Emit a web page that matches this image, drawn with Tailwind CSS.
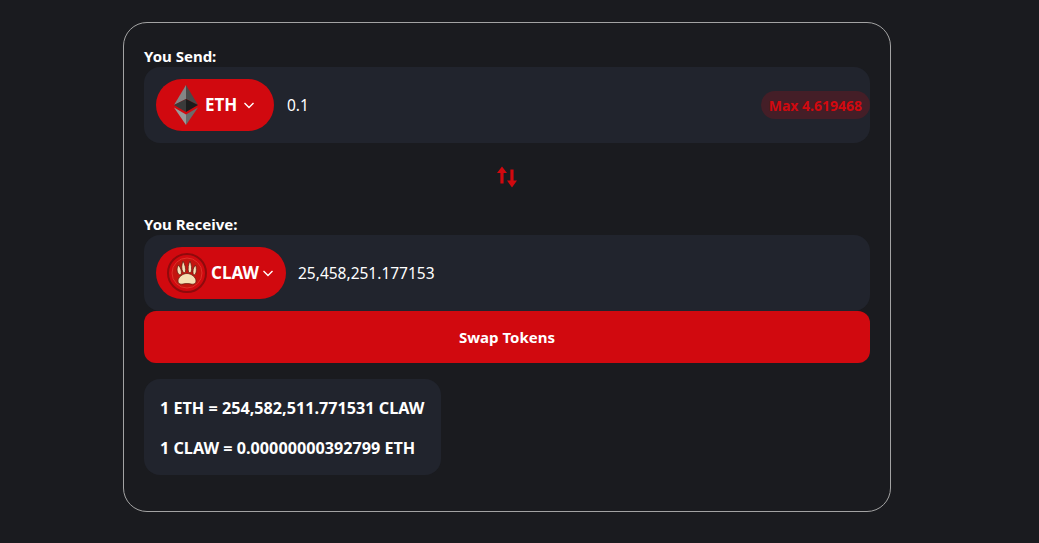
<!DOCTYPE html>
<html lang="en">
<head>
    <meta charset="UTF-8">
    <title>Swap</title>
    <script src="https://cdn.jsdelivr.net/npm/@tailwindcss/browser@4"></script>
</head>
<body class="bg-[#1a1b1f] h-[543px] overflow-hidden font-['Noto_Sans',sans-serif] text-white">
    <main class="w-[768px] h-[490px] ml-[123px] mt-[22px] border border-[#a3a3a3] rounded-3xl px-5 pt-[22px]">
        <!-- Send -->
        <div class="text-[15px] font-bold leading-[22px]">You Send:</div>
        <div class="h-[76px] bg-[#21242d] rounded-2xl flex items-center pl-3">
            <button class="w-[118px] h-[52px] bg-[#d1090f] rounded-full flex items-center pl-[15px] shrink-0">
                <svg width="30" height="40" viewBox="0 0 30 40" class="shrink-0">
                    <polygon points="15,0 15,14 3,20" fill="#858585"/>
                    <polygon points="15,0 27,20 15,14" fill="#4a4a4a"/>
                    <polygon points="3,20 15,14 15,27" fill="#3a3a3a"/>
                    <polygon points="15,14 27,20 15,27" fill="#1c1c1c"/>
                    <polygon points="3,22.5 15,29.5 15,40" fill="#9a9a9a"/>
                    <polygon points="27,22.5 15,29.5 15,40" fill="#6b6b6b"/>
                </svg>
                <span class="ml-[4px] text-[17px] font-bold">ETH</span>
                <svg width="12" height="12" viewBox="0 0 12 12" fill="none" stroke="white" stroke-width="1.4" class="ml-[6px]"><path d="M1.5 4l4.5 4.500L10.500 4"/></svg>
            </button>
            <span class="ml-[13px] pt-[2px] text-[15.5px]">0.1</span>
            <span class="ml-auto h-7 pt-[1px] flex items-center rounded-full bg-[#d1090f]/20 px-2 text-sm font-bold text-[#d1090f]">Max 4.619468</span>
        </div>

        <div class="h-[70px] pb-[2px] flex items-center justify-center">
            <svg width="24" height="24" viewBox="0 0 24 24" fill="#d1090f">
                <path d="M7 1.500l5 6.500H8.600v10.500H5.400V8H2z"/>
                <path d="M15.400 4.500h3.200V15.500H22l-5 7-5-7h3.400z"/>
            </svg>
        </div>

        <!-- Receive -->
        <div class="text-[15px] font-bold leading-[22px]">You Receive:</div>
        <div class="h-[76px] bg-[#21242d] rounded-2xl flex items-center pl-3">
            <button class="w-[130px] h-[52px] bg-[#d1090f] rounded-full flex items-center pl-[11px] shrink-0">
                <svg width="40" height="40" viewBox="0 0 40 40" class="shrink-0">
                    <circle cx="20" cy="20" r="19" fill="#d1090f" stroke="#8e0a0c" stroke-width="2"/>
                    <circle cx="20" cy="20" r="15" fill="#c4150f" stroke="#e0302a" stroke-width="1"/>
                    <g fill="#f6dfb4" stroke="#5b1a10" stroke-width="0.7">
                        <path d="M11 28c0-4 5-7.500 9-7.500s9 3.500 9 7.500c0 3-3 3.500-5 3-2.500-.6-5.500-.6-8 0-2 .5-5 0-5-3z"/>
                        <path d="M11.500 21c-2-2.500-1.800-6 0-9 2 2.500 3.300 6 2.800 9-.8 1-2 1-2.800 0z"/>
                        <path d="M16 19c-1.800-3-1.500-7 0-11 2 3.500 3 7.500 2.500 11-.7.800-1.800.800-2.500 0z"/>
                        <path d="M21.500 19c-.7-3.500-.3-7.500 1.500-11 1.500 3.500 2 7.500 1.200 11-.8.800-2 .800-2.700 0z"/>
                        <path d="M26.200 21c-.7-3 0-6.500 2.300-9 1.200 3 1.200 6.500 0 9-.7 1-1.700 1-2.300 0z"/>
                    </g>
                </svg>
                <span class="ml-[4px] text-[17px] font-bold">CLAW</span>
                <svg width="12" height="12" viewBox="0 0 12 12" fill="none" stroke="white" stroke-width="1.4" class="ml-[3px]"><path d="M1.5 4l4.500 4.500L10.500 4"/></svg>
            </button>
            <span class="ml-3 pt-[2px] text-[15.5px]">25,458,251.177153</span>
        </div>
        <button class="w-full h-[52px] bg-[#d1090f] rounded-xl text-[15px] font-bold block">Swap Tokens</button>

        <!-- Rates -->
        <div class="mt-4 w-[297px] h-[96px] pt-[2px] bg-[#21242d] rounded-2xl px-4 flex flex-col justify-center gap-[18px] text-[16.2px] font-bold leading-[22px]">
            <p>1 ETH = 254,582,511.771531 CLAW</p>
            <p>1 CLAW = 0.00000000392799 ETH</p>
        </div>
    </main>
</body>
</html>
